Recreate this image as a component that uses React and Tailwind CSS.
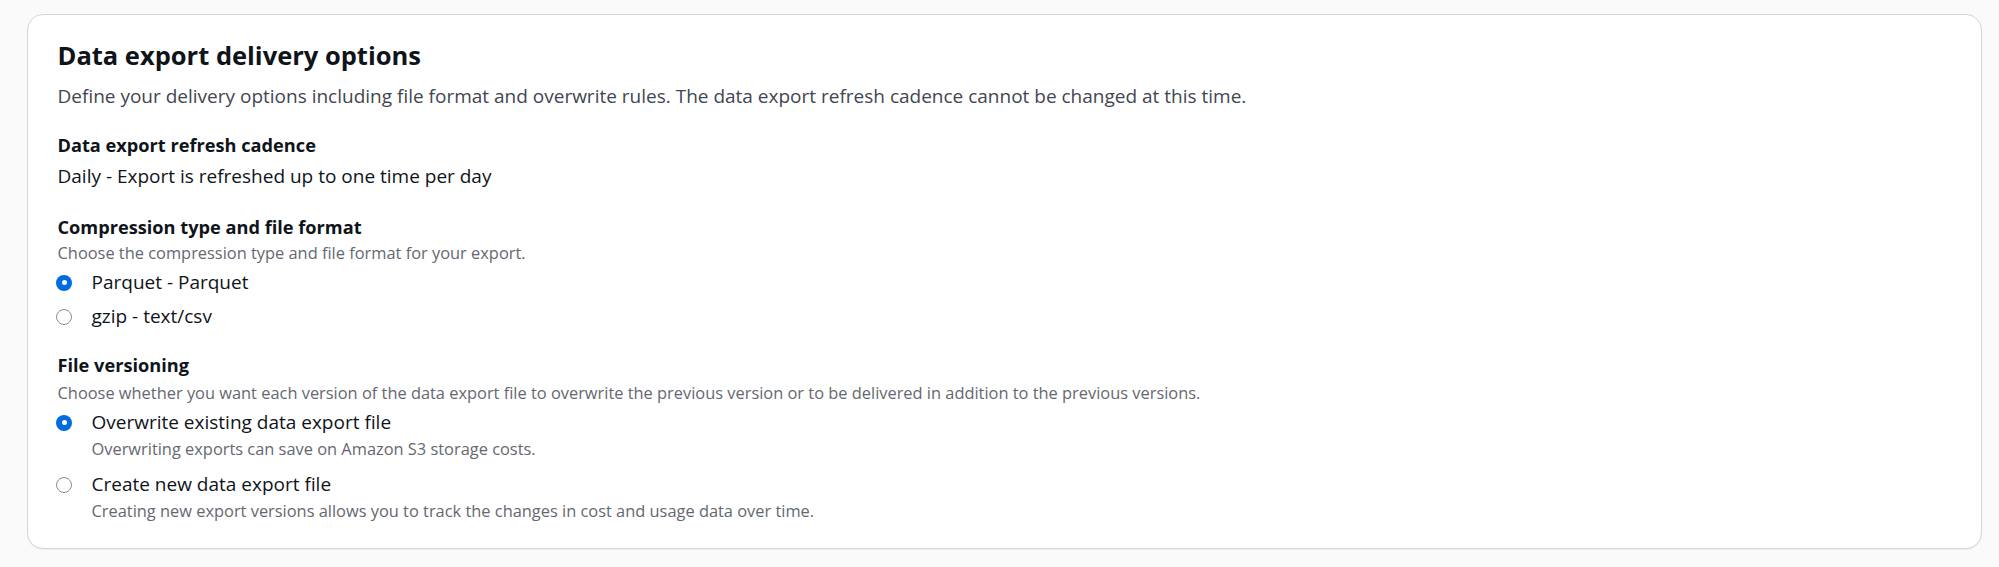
export default function App() {
  const font = { fontFamily: '"Open Sans", "Noto Sans", Arial, sans-serif' };
  const Radio = ({ checked }) =>
    checked ? (
      <span className="flex h-[16px] w-[16px] shrink-0 items-center justify-center rounded-full bg-[#006ce0]">
        <span className="h-[5px] w-[5px] rounded-full bg-white" />
      </span>
    ) : (
      <span className="h-[16px] w-[16px] shrink-0 rounded-full border-[1.5px] border-[#8c8c94] bg-white" />
    );
  const Option = ({ checked, label, desc, className }) => (
    <div className={"flex " + className}>
      <div className="-ml-[1.5px] flex h-[27px] w-[35.5px] shrink-0 items-center">
        <Radio checked={checked} />
      </div>
      <div className="flex flex-col">
        <div className="text-[19px] leading-[27px] text-[#0f141a]">{label}</div>
        {desc && <div className="mt-[1.5px] text-[16.4px] leading-[22px] text-[#656871]">{desc}</div>}
      </div>
    </div>
  );
  return (
    <div className="min-h-[567px] w-full bg-[#fafafa] pl-[27px] pr-[17px] pt-[14px]" style={font}>
      <div className="flex flex-col rounded-[16px] border-[1.5px] border-[#d5d5dc] bg-white pb-[26px] pl-[29.5px] pr-[30px] pt-[24.5px] shadow-[0_1px_1px_rgba(0,0,0,0.05)]">
        <h2 className="text-[25.5px] font-bold leading-[30px] text-[#0f141a]">Data export delivery options</h2>
        <p className="mt-[13px] text-[19px] leading-[26px] text-[#424650]">
          Define your delivery options including file format and overwrite rules. The data export refresh cadence cannot be changed at this time.
        </p>

        <div className="mt-[23.5px] text-[18.2px] font-bold leading-[27px] text-[#0f141a]">Data export refresh cadence</div>
        <div className="mt-[4px] text-[19px] leading-[27px] text-[#0f141a]">Daily - Export is refreshed up to one time per day</div>

        <div className="mt-[24px] text-[18.2px] font-bold leading-[27px] text-[#0f141a]">Compression type and file format</div>
        <div className="mt-[0.5px] text-[16.4px] leading-[22px] text-[#656871]">Choose the compression type and file format for your export.</div>
        <Option checked label="Parquet - Parquet" className="mt-[5.5px]" />
        <Option label="gzip - text/csv" className="mt-[7px]" />

        <div className="mt-[22px] text-[18.2px] font-bold leading-[27px] text-[#0f141a]">File versioning</div>
        <div className="mt-[2.5px] text-[16.4px] leading-[22px] text-[#656871]">
          Choose whether you want each version of the data export file to overwrite the previous version or to be delivered in addition to the previous versions.
        </div>
        <Option
          checked
          label="Overwrite existing data export file"
          desc="Overwriting exports can save on Amazon S3 storage costs."
          className="mt-[5.5px]"
        />
        <Option
          label="Create new data export file"
          desc="Creating new export versions allows you to track the changes in cost and usage data over time."
          className="mt-[11.5px]"
        />
      </div>
    </div>
  );
}
